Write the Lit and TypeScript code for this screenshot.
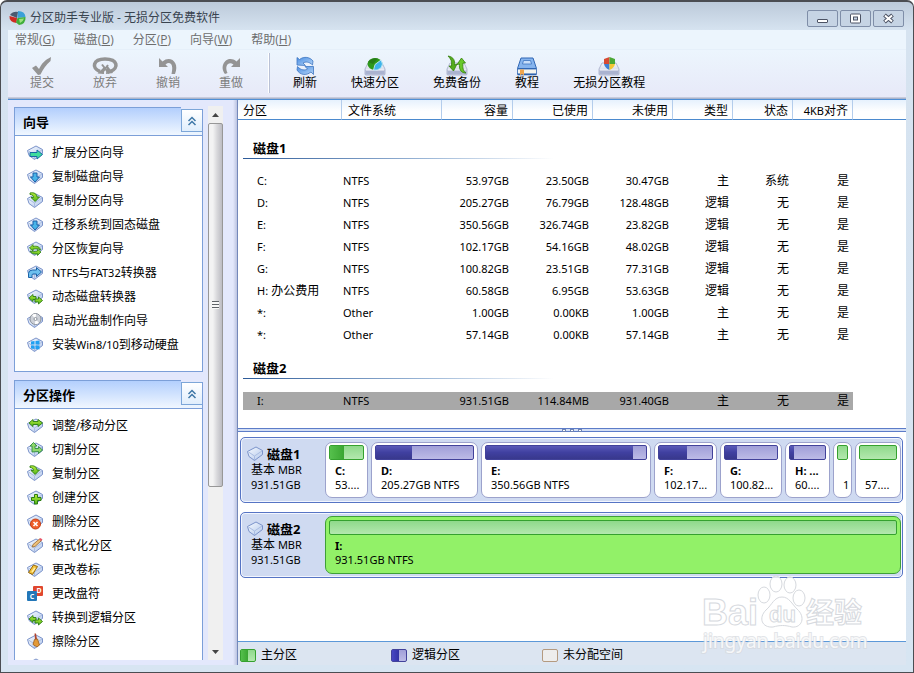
import { LitElement, html, css, svg, nothing } from "lit";
import { customElement, state } from "lit/decorators.js";
import { classMap } from "lit/directives/class-map.js";
import { styleMap } from "lit/directives/style-map.js";

type Row = string[];
interface Volume { name: string; label: string; share: number; used: number; kind: "primary" | "logical"; selected?: boolean; }

const MENUS = [["常规", "G"], ["磁盘", "D"], ["分区", "P"], ["向导", "W"], ["帮助", "H"]];

const WIZARDS = [
  ["extend", "扩展分区向导"], ["down", "复制磁盘向导"], ["copy", "复制分区向导"],
  ["down", "迁移系统到固态磁盘"], ["recover", "分区恢复向导"], ["convert", "NTFS与FAT32转换器"],
  ["swap", "动态磁盘转换器"], ["disc", "启动光盘制作向导"], ["win", "安装Win8/10到移动硬盘"],
];

const OPERATIONS = [
  ["resize", "调整/移动分区"], ["split", "切割分区"], ["copy", "复制分区"], ["create", "创建分区"],
  ["remove", "删除分区"], ["format", "格式化分区"], ["label", "更改卷标"], ["letter", "更改盘符"],
  ["swap", "转换到逻辑分区"], ["wipe", "擦除分区"], ["plain", ""],
];

const HEADERS = ["分区", "文件系统", "容量", "已使用", "未使用", "类型", "状态", "4KB对齐"];

const GROUPS: { title: string; rows: Row[] }[] = [
  {
    title: "磁盘1",
    rows: [
      ["C:", "NTFS", "53.97GB", "23.50GB", "30.47GB", "主", "系统", "是"],
      ["D:", "NTFS", "205.27GB", "76.79GB", "128.48GB", "逻辑", "无", "是"],
      ["E:", "NTFS", "350.56GB", "326.74GB", "23.82GB", "逻辑", "无", "是"],
      ["F:", "NTFS", "102.17GB", "54.16GB", "48.02GB", "逻辑", "无", "是"],
      ["G:", "NTFS", "100.82GB", "23.51GB", "77.31GB", "逻辑", "无", "是"],
      ["H: 办公费用", "NTFS", "60.58GB", "6.95GB", "53.63GB", "逻辑", "无", "是"],
      ["*:", "Other", "1.00GB", "0.00KB", "1.00GB", "主", "无", "是"],
      ["*:", "Other", "57.14GB", "0.00KB", "57.14GB", "主", "无", "是"],
    ],
  },
  { title: "磁盘2", rows: [["I:", "NTFS", "931.51GB", "114.84MB", "931.40GB", "主", "无", "是"]] },
];

const DISKS: { title: string; volumes: Volume[] }[] = [
  {
    title: "磁盘1",
    volumes: [
      { name: "C:", label: "53....", share: 43, used: 43, kind: "primary" },
      { name: "D:", label: "205.27GB NTFS", share: 107, used: 37, kind: "logical" },
      { name: "E:", label: "350.56GB NTFS", share: 170, used: 92, kind: "logical" },
      { name: "F:", label: "102.17...", share: 63, used: 52, kind: "logical" },
      { name: "G:", label: "100.82...", share: 62, used: 23, kind: "logical" },
      { name: "H: ...", label: "60....", share: 45, used: 11, kind: "logical" },
      { name: "", label: "1", share: 19, used: 0, kind: "primary" },
      { name: "", label: "57....", share: 46, used: 0, kind: "primary" },
    ],
  },
  { title: "磁盘2", volumes: [{ name: "I:", label: "931.51GB NTFS", share: 576, used: 0, kind: "primary", selected: true }] },
];

/* Latin runs inside Chinese labels are set one size smaller. */
const mixed = (text: string) =>
  text.split(/([\x21-\x7e]+)/).map((part) => (/^[\x21-\x7e]+$/.test(part) ? html`<span class="latin">${part}</span>` : part));

const drive = svg`<path d="M.5 5.500 L9 1 L15.500 4.500 V8.500 L7.500 14.500 L2 10.500 Z" fill="url(#drive)" stroke="#7b93ca"/>
  <path d="M1.500 6 L7.500 10 L15 5 M7.500 10 V14" fill="none" stroke="#a9bce2"/>`;
const green = { fill: "url(#leaf)", line: "#2b7d12" };

const OVERLAYS: Record<string, unknown> = {
  plain: nothing,
  extend: svg`<path d="M3 7.500 H10 V5 L15.500 9.500 L10 14 V11.500 H3 Z" fill="#3ddc9c" stroke="#1668a8"/>`,
  down: svg`<path d="M6 4 H10 V8 H12.500 L8 13 L3.500 8 H6 Z" fill="#48b4e8" stroke="#1a5fa8"/>`,
  copy: svg`<path d="M3 0 C7 -1 10 1 10 4 H12.500 L8.200 8.500 L4 4.500 H6.500 C6.500 2.500 5 1.500 3 1.500 Z" fill=${green.fill} stroke=${green.line} stroke-width=".9"/>`,
  recover: svg`<path d="M2.500 7 L6 3.500 V5.500 C10 4.500 13 6 13.500 9 C11 7.500 9 7.500 6 8.200 V10 Z" fill=${green.fill} stroke=${green.line} stroke-width=".8"/>
    <path d="M14 11 L10.500 14.500 V12.800 C7 13.500 4 12.500 3 10 C6 11 8 10.800 10.500 10 V8.500 Z" fill=${green.fill} stroke=${green.line} stroke-width=".8"/>`,
  convert: svg`<path d="M1.500 12.500 V8.500 Q1.500 5 5.500 5 H9.500 V2.500 L14.500 7 L9.500 11.500 V9 H6 Q5 9 5 10.500 V12.500 Z" fill="#6cc0ee" stroke="#1c62a8"/>`,
  swap: svg`<path d="M2 9 L6 5.500 V7.500 H9 V10.500 H6 V12.500 Z" fill=${green.fill} stroke=${green.line} stroke-width=".9"/>
    <path d="M15.500 11.500 L11.500 8 V10 H8 V13 H11.500 V15 Z" fill=${green.fill} stroke=${green.line} stroke-width=".9"/>`,
  disc: svg`<circle cx="8.500" cy="6" r="5.500" fill="#cdd1d8" stroke="#8d939c"/><path d="M8.500 6 L5 2 A5 5 0 0 1 9 1 Z M8.500 6 L12 10 A5 5 0 0 1 8 11 Z" fill="#fff"/><circle cx="8.500" cy="6" r="1.500" fill="#fff" stroke="#8d939c"/>`,
  win: svg`<path d="M4 4.500 L7.500 4 V7.500 H4 Z M8.500 4 L12.500 3.500 V7.500 H8.500 Z M4 8.500 H7.500 V12 L4 11.500 Z M8.500 8.500 H12.500 V12.500 L8.500 12 Z" fill="#1fa0f2"/>`,
  resize: svg`<path d="M2 5 L6 1.500 V3.500 H11 V1.500 L15.500 5 L11 8.500 V6.500 H6 V8.500 Z" fill=${green.fill} stroke=${green.line} stroke-width=".9"/>`,
  split: svg`<path d="M5 10 V4 H3 L6.500 .5 L10 4 H8 V6.500 H11.500 V4.500 L15.500 8 L11.500 11.500 V9.500 Z" fill="#8fd86c" stroke="#2f8a40" stroke-width=".9"/>`,
  create: svg`<path d="M7.500 4.500 H10.500 V7.500 H14 V10.500 H10.500 V14 H7.500 V10.500 H4.500 V7.500 H7.500 Z" fill=${green.fill} stroke=${green.line}/>`,
  remove: svg`<circle cx="8.500" cy="10" r="5" fill="#f0602c" stroke="#c63c12"/><path d="M6.500 8 L10.500 12 M10.500 8 L6.500 12" stroke="#fff" stroke-width="1.600"/>`,
  format: svg`<path d="M5 9 L6 6.500 L12.500 1 L14.500 2.500 L8 8.500 Z" fill="#efc27a" stroke="#95672e" stroke-width=".8"/><path d="M12 1.500 L13.500 0 L15.500 1.500 L14 3 Z" fill="#e8566a"/>`,
  label: svg`<path d="M1.500 10.500 L6.500 3 L10.500 4.500 L5.500 12.500 Z" fill="#f4c33c" stroke="#98690c"/><path d="M5 10 L8 6" stroke="#fff0a8" stroke-width="1.500"/>`,
  wipe: svg`<path d="M7.500 -.5 L9 -.5 L10 5 L8 5.500 Z" fill="#b0432e"/><path d="M7.500 5.500 L10.500 5 L12.500 11 L10 13 L6 10.500 Z" fill="#e39a38" stroke="#9c5c18" stroke-width=".8"/>`,
};

const icon16 = (name: string) => html`<svg class="icon" viewBox="0 0 16 16" aria-hidden="true">${name === "letter"
  ? svg`<rect x="6" width="10" height="10" rx="1" fill="#e0472f"/><rect y="5" width="10" height="10" rx="1" fill="#2377b8"/>
      <text class="glyph" x="12" y="7">D</text><text class="glyph" x="5" y="13">C</text>`
  : svg`${drive}${OVERLAYS[name]}`}</svg>`;

const tray = svg`<path d="M4 7 H18 L21 13 V18 Q21 19 20 19 H2 Q1 19 1 18 V13 Z" fill="url(#tray)" stroke="#a2aac6" stroke-width=".8"/>
  <path d="M1.500 14 H20.500 V18 H1.500 Z" fill="#aab3d0"/><path d="M2 14 H20" stroke="#f4f6fc"/>`;

const TOOLS: { label: string; disabled?: boolean; art: unknown }[] = [
  { label: "提交", disabled: true, art: svg`<path d="M1 12 L5 9.500 L8 13 C11 7 14 4 20 1 L19.500 5 C15 9 12 13 9.500 18.500 L7 19 Z" fill="#949494"/>` },
  { label: "放弃", disabled: true, art: svg`<path d="M6 15.500 C-3 12 -1 3 11 3 C24 3 25 12 16.500 15.500" fill="none" stroke="#949494" stroke-width="3.600"/><path d="M3.500 17.500 L10 18 L10 11 Z M13 9 L19 17 L12 18 Z" fill="#949494"/><path d="M8 8.500 L15 17.500 M14 9 L8 17" stroke="#949494" stroke-width="2"/>` },
  { label: "撤销", disabled: true, art: svg`<path d="M2 2 L2 11 L11 11 L8.500 8.500 C13 5 17 8 14.500 18 L18 18 C23 6 13 -1 5.500 5.500 Z" fill="#949494"/>` },
  { label: "重做", disabled: true, art: svg`<path d="M20 2 L20 11 L11 11 L13.500 8.500 C9 5 4 9 7.500 17 L5 18 C-2 9 8 -2 16.500 5.500 Z" fill="#949494"/>` },
  { label: "刷新", art: svg`<path d="M3 9 L3 1.500 L5.500 3.500 C10 0 16 1 19 5 L18.500 9 C15 5.500 11.500 5.500 9 7 L11.500 9.500 Z" fill="url(#sky)" stroke="#3f76c0" stroke-width=".8"/><path d="M19.500 10.500 V18.500 L17 16 C12 20 6 19 3 14 L3.500 10.500 C7 14.500 11 14.500 13.500 13 L11 10.500 Z" fill="url(#sky)" stroke="#3f76c0" stroke-width=".8"/>` },
  { label: "快速分区", art: svg`${tray}<ellipse cx="11" cy="8" rx="7.500" ry="6" fill="#2f9a1c"/><path d="M4 6 Q8 1 14 2.500 L9 8 Z" fill="#277d18"/><path d="M11 8.500 L17 4 Q20 8 17 12 Q13 15 9.500 14 Z" fill="#3eb4ea" stroke="#d6f0ff" stroke-width=".8"/>` },
  { label: "免费备份", art: svg`${tray}<path d="M2 0 C8 1 9 5 8.500 9 L11 8 L7.500 15 L3 10 L5.500 10 C6 5 5 3 2 0 Z" fill="#55ad1e" stroke="#347f0c" stroke-width=".8"/><path d="M20 17 C14 17 13 12 13.500 8 L11 8.500 L15.500 2 L19.500 7 L17 7 C16.500 12 17 15 20 17 Z" fill="#68c82a" stroke="#347f0c" stroke-width=".8"/>` },
  { label: "教程", art: svg`<path d="M5 2 H17 L20.500 12.500 H1.500 Z" fill="#86b4ee" stroke="#3167b4"/><path d="M7.500 4.500 H14.500 L15.500 8 H6.500 Z" fill="#c8defa" stroke="#3c74bf" stroke-width=".8"/><rect x="1.500" y="13" width="19" height="5" fill="#f4f4ee" stroke="#3167b4" stroke-width=".8"/><path d="M1.500 18.500 H20.500" stroke="#2c62ae" stroke-width="1.500"/><path d="M4 13.500 H8 V19.500 L6 18 L4 19.500 Z" fill="#f2a64c"/>` },
  { label: "无损分区教程", art: svg`${tray}<path d="M11.500 1 L6 3 V8 H11.500 Z" fill="#d84a32"/><path d="M11.500 1 L17 3 V8 H11.500 Z" fill="#4ba836"/><path d="M6 8 H11.500 V14 Q7 12 6 8 Z" fill="#3d80d4"/><path d="M17 8 H11.500 V14 Q16 12 17 8 Z" fill="#f4c734"/>` },
];

@customElement("app-root")
export class AppRoot extends LitElement {
  @state() private closed = new Set<string>();

  static styles = css`
    :host {
      display: block;
      height: 100vh;
      min-height: 480px;
      color: #000;
      font: 12px/16px "Noto Sans", "Noto Sans CJK SC", sans-serif;
    }
    * { box-sizing: border-box; }
    button {
      margin: 0; padding: 0; border: 0; background: none;
      color: inherit; font: inherit; cursor: default;
    }
    .defs { position: absolute; width: 0; height: 0; }
    .latin { font-size: 11px; }
    .icon { display: block; width: 16px; height: 16px; flex: none; overflow: visible; }
    .glyph { font: bold 7px "Noto Sans", sans-serif; fill: #fff; text-anchor: middle; }

    .window {
      position: relative; height: 100%;
      display: flex; flex-direction: column;
      padding: 0 7px 7px;
      border: 1px solid #4b4d52; border-top-width: 2px;
      border-radius: 7px 7px 0 0;
      background: linear-gradient(#bccada, #d6e3f0 28px, #d7e5f2);
      overflow: hidden;
    }
    .titlebar { display: flex; align-items: center; height: 28px; flex: none; padding: 4px 2px 0 1px; gap: 4px; color: #38434f; }
    .titlebar h1 { flex: 1; margin: 0; font: inherit; font-family: "Noto Sans", "Noto Sans CJK SC", sans-serif; }
    .logo { width: 17px; height: 16px; }
    .controls { display: flex; gap: 2px; }
    .controls button { width: 31px; height: 17px; border: 1px solid #7f8ea8; border-radius: 2px; background: #c6d4e4; }
    .controls svg { display: block; margin: auto; width: 13px; height: 11px; }

    .menubar { display: flex; gap: 19px; flex: none; height: 20px; padding: 0 7px; background: #ecf5fd; color: #6d6d6d; border-bottom: 1px solid #e6f0fa; }
    .menubar button { line-height: 20px; font-family: "Open Sans", "Noto Sans CJK SC", sans-serif; }
    .toolbar { display: flex; flex: none; height: 49px; padding: 6px 22px 0; background: linear-gradient(#ecf5fd, #e7e9f8); border-bottom: 1px solid #a9b4cc; box-shadow: inset 0 -1px #c7cbdc; }
    .tools { display: flex; gap: 39px; }
    .tools.main { gap: 34px; margin-left: 23px; }
    .tools button { display: flex; flex-direction: column; align-items: center; min-width: 24px; line-height: 14px; white-space: nowrap; height: 36px; }
    .tools button:disabled { color: #7d7d7d; }
    .tools svg { width: 22px; height: 20px; flex: none; overflow: visible; }
    .rule { width: 2px; height: 40px; margin-top: -3px; margin-left: 25px; background: linear-gradient(90deg, #fff 50%, #b9c1d6 50%); }

    .body { flex: 1; min-height: 0; display: flex; border-top: 1px solid #4f8fd6; background: #fff; }
    .side { flex: none; width: 225px; display: flex; gap: 5px; padding: 6px 10px 5px 6px; background: #e3e8fc; }
    .panels { flex: 1; min-width: 0; overflow: hidden; display: flex; flex-direction: column; gap: 8px; padding-top: 1px; }
    .panel { flex: none; }
    .head { display: flex; height: 29px; }
    .head h2 { flex: 1; margin: 0; padding: 0 8px; font-size: 13px; line-height: 28px; background: linear-gradient(#b3cffd, #f0f7ff); border: 1px solid #7c9fd8; border-right: 0; }
    .fold { width: 22px; margin-top: 2px; display: flex; flex-direction: column; background: #ebf4fe; border-bottom: 1px solid #7c9fd8; border-right: 1px solid #7c9fd8; }
    .fold button { height: 23px; border: 1px solid #7ca6d8; border-right: 0; background: linear-gradient(#fff, #e0eefc); }
    .fold svg { display: block; margin: auto; width: 10px; height: 10px; }
    .list { margin: 0; padding: 5px 12px 14px; list-style: none; background: #fff; border: 1px solid #7c9fd8; border-top: 0; }
    .list button { display: flex; align-items: center; gap: 9px; height: 24px; width: 100%; white-space: nowrap; }

    .scroll { flex: none; width: 15px; display: flex; flex-direction: column; background: #f0f0f0; }
    .scroll button { height: 17px; }
    .scroll svg { display: block; margin: auto; width: 7px; height: 4px; }
    .track { flex: 1; }
    .thumb { height: 70%; border: 1px solid #979797; border-radius: 2px; display: flex; align-items: center; justify-content: center; background: linear-gradient(90deg, #f3f3f3 30%, #d9d9dc 60%, #bcbcc2); }
    .grip { width: 7px; height: 8px; background: repeating-linear-gradient(#5f6368 0 1px, #f8f8f8 1px 3px); }
    .split { flex: none; width: 5px; background: linear-gradient(90deg, #e4e8fb, #c0c8e4 70%, #7488ba 80%); }

    .main-pane { flex: 1; min-width: 0; display: flex; flex-direction: column; }
    .grid { flex: none; height: 328px; overflow: hidden; }
    table { width: 100%; table-layout: fixed; border-spacing: 0; font-size: 11px; }
    th, td { padding: 0 4px 0 0; text-align: right; white-space: nowrap; overflow: hidden; }
    thead th { height: 20px; font-weight: normal; font-size: 12px; line-height: 17px; background: linear-gradient(#e6f1fd, #fff 60%); border-bottom: 1px solid #4c8ace; padding-top: 2px; border-right: 1px solid #b4cdec; }
    thead th.blank { border-right: 0; }
    thead th.first { text-align: left; padding-left: 5px; }
    thead th.fs { text-align: left; padding-left: 6px; }
    .gap { width: 5px; } .c-name { width: 99px; } .c-fs { width: 100px; } .c-cap { width: 71px; }
    .c-size { width: 80px; } .c-flag { width: 60px; }
    td { height: 22px; line-height: 18px; border: solid transparent; border-width: 2px 0; background-clip: padding-box; }
    td.name { text-align: left; padding-left: 14px; }
    td.fs { text-align: left; padding-left: 1px; }
    td.zh, .zh { font-size: 12px; }
    .picked td:not(.blank) { background-color: #a8a8a8; }
    th.group { padding: 12px 0 11px 5px; text-align: left; font-size: 13px; line-height: 20px; }
    tbody:first-of-type th.group { padding-top: 18px; }
    .group span { display: block; max-width: 310px; padding-left: 10px; border-bottom: 1px solid; border-image: linear-gradient(90deg, #2c5a98, #9db8d8 60%, #fff) 1; }

    .bar { flex: none; height: 4px; display: flex; justify-content: center; gap: 4px; border: solid #5c7cc8; border-width: 1px 0; background: #d3def4; }
    .bar i { width: 4px; height: 3px; border: 1px solid #6d83b4; background: #fff; }
    .disks { flex: 1; min-height: 0; overflow: hidden; display: flex; flex-direction: column; gap: 9px; padding: 5px 3px 0 2px; }
    .disk { flex: none; display: flex; height: 66px; padding: 3px 1px 3px 0; border: 1px solid #5674c4; border-radius: 5px; background: #cfdaf1; box-shadow: inset 0 0 0 1px #f2f6ff; }
    .info { flex: none; width: 84px; padding: 5px 0 0 10px; font-size: 11px; line-height: 15px; }
    .info h3 { display: flex; align-items: center; gap: 4px; margin: 0 0 0 -4px; font-size: 13px; line-height: 16px; white-space: nowrap; }
    .info p { margin: 0; }
    .volumes { flex: 1; min-width: 0; display: grid; gap: 3px; }
    .volume { min-width: 0; margin: 1px 0; padding: 2px 3px; border: 1px solid #9ca2cc; border-radius: 7px; background: #fff; text-align: left; font-size: 11px; line-height: 14px; white-space: nowrap; overflow: hidden; display: flex; flex-direction: column; align-items: stretch; }
    .volume b, .volume span { padding-left: 6px; height: 14px; }
    .volume b { margin-top: 4px; }
    .volume.selected { margin: 0; padding: 3px; background: #92f168; border-color: #3f9f38; }
    .usage { display: block; flex: none; border: 1px solid; border-radius: 2px; }
    .volume .usage { height: 15px; padding: 0; }
    .usage i { display: block; height: 100%; }
    .primary { border-color: #35a12f; background: linear-gradient(#8fd98b, #b3e8ae); }
    .primary i { background: linear-gradient(90deg, #55c04c, #3aa632); }
    .logical { border-color: #42429a; background: linear-gradient(#a09fd8, #bcbbe6); }
    .logical i { background: linear-gradient(#5a5ab8, #4040a0 50%, #38388c); }
    .free { border-color: #b49a80; background: #ededed; }

    .legend { flex: none; display: grid; grid-template-columns: repeat(3, 151px); align-items: center; height: 24px; padding: 3px 2px 0; border-top: 1px solid #5c98d8; background: #dce5f1; }
    .legend div { display: flex; align-items: center; gap: 5px; }
    .legend .usage { width: 16px; height: 13px; }
    .legend .usage i { width: 50%; }
    .legend .logical i { background: linear-gradient(90deg, #4646c4, #3232a4); }
    .watermark { position: absolute; right: 46px; bottom: 16px; width: 166px; height: 82px; overflow: visible; pointer-events: none; fill: #fff; fill-opacity: .8; stroke: #d6d9de; stroke-width: 1px; }
    .mark-name { font: bold 36px "Liberation Sans", sans-serif; }
    .mark-du { font: bold 22px "Liberation Sans", sans-serif; }
    .mark-zh { font: bold 28px "Noto Sans CJK SC", sans-serif; }
    .mark-url { font: 19px "Noto Sans", sans-serif; paint-order: stroke; stroke-width: 2px; stroke-opacity: .7; }
  `;

  private toggle(title: string) {
    const next = new Set(this.closed);
    if (!next.delete(title)) next.add(title);
    this.closed = next;
  }

  private panel(title: string, items: string[][]) {
    return html`<section class="panel">
      <div class="head">
        <h2>${title}</h2>
        <div class="fold"><button @click=${() => this.toggle(title)}>
          <svg viewBox="0 0 10 10"><path d="M1.500 5 L5 1.500 L8.500 5 M1.500 9 L5 5.500 L8.500 9" fill="none" stroke="#3f78a8" stroke-width="1.500"/></svg>
        </button></div>
      </div>
      ${this.closed.has(title) ? nothing : html`<ul class="list">
        ${items.map(([icon, text]) => html`<li><button>${icon16(icon)}<span>${mixed(text)}</span></button></li>`)}
      </ul>`}
    </section>`;
  }

  private tool = (t: (typeof TOOLS)[number]) =>
    html`<button ?disabled=${!!t.disabled}><svg viewBox="0 0 22 20">${t.art}</svg>${t.label}</button>`;

  private row(cells: Row, picked: boolean) {
    const kinds = ["name", "fs"];
    return html`<tr class=${classMap({ picked })}>
      <td class="blank"></td>
      ${cells.map((c, i) => html`<td class="${kinds[i] ?? ""} ${i === 0 || i > 4 ? "zh" : ""}">${mixed(c)}</td>`)}
      <td class="blank"></td>
    </tr>`;
  }

  private volume(v: Volume) {
    return html`<button class=${classMap({ volume: true, selected: !!v.selected })}>
      <span class="usage ${v.kind}"><i style=${styleMap({ width: `${v.used}%` })}></i></span>
      <b>${v.name}</b><span>${v.label}</span>
    </button>`;
  }

  private volumes(list: Volume[]) {
    const gridTemplateColumns = list.map((v) => `minmax(0, ${v.share}fr)`).join(" ");
    return html`<div class="volumes" style=${styleMap({ gridTemplateColumns })}>${list.map((v) => this.volume(v))}</div>`;
  }

  render() {
    return html`
      <svg class="defs" aria-hidden="true"><defs>
        <linearGradient id="drive" x2="1" y2="1"><stop stop-color="#f6faff"/><stop offset="1" stop-color="#b4c8ea"/></linearGradient>
        <linearGradient id="leaf" x2="0" y2="1"><stop stop-color="#b8ec38"/><stop offset="1" stop-color="#4fb41c"/></linearGradient>
        <linearGradient id="tray" x2="0" y2="1"><stop stop-color="#f6f7fb"/><stop offset="1" stop-color="#c2c9de"/></linearGradient>
        <linearGradient id="sky" x2="1" y2="1"><stop stop-color="#4a8ee4"/><stop offset="1" stop-color="#b4d4f6"/></linearGradient>
      </defs></svg>
      <div class="window">
        <header class="titlebar">
          <svg class="logo" viewBox="0 0 17 16" aria-hidden="true">
            <path d="M1 5 Q4 1 9 2 L8 8 Z" fill="#4c5a70"/><path d="M9 1 Q16 1 16.500 7 L8.500 8 Z" fill="#3aa0d8"/>
            <path d="M.5 6 L8 8 L7.500 13 Q0 12 .5 6 Z" fill="#cf2a22"/><path d="M8.500 8 L16.500 7 Q17 14 10 15 L7 12.500 Z" fill="#3fae3a"/><path d="M10 9 L15 8.500 Q14 12 11 13 Z" fill="#9be07e"/>
          </svg>
          <h1>分区助手专业版 - 无损分区免费软件</h1>
          <div class="controls">
            <button><svg viewBox="0 0 13 11"><rect x="1.500" y="6.500" width="10" height="3" rx=".5" fill="#fff" stroke="#4c5364"/></svg></button>
            <button><svg viewBox="0 0 13 11"><rect x="1.500" y="1" width="10" height="9" rx="1" fill="#fff" stroke="#4c5364"/><rect x="4.500" y="4" width="4" height="3" fill="#c6d4e4" stroke="#4c5364"/></svg></button>
            <button><svg viewBox="0 0 13 11"><path d="M2.500 2 L10.500 9 M10.500 2 L2.500 9" stroke="#4c5364" stroke-width="4"/><path d="M3 2.500 L10 8.500 M10 2.500 L3 8.500" stroke="#fff" stroke-width="2"/></svg></button>
          </div>
        </header>
        <nav class="menubar">${MENUS.map(([t, k]) => html`<button>${t}(<u>${k}</u>)</button>`)}</nav>
        <div class="toolbar">
          <div class="tools">${TOOLS.filter((t) => t.disabled).map(this.tool)}</div>
          <div class="rule"></div>
          <div class="tools main">${TOOLS.filter((t) => !t.disabled).map(this.tool)}</div>
        </div>
        <div class="body">
          <aside class="side">
            <div class="panels">${this.panel("向导", WIZARDS)}${this.panel("分区操作", OPERATIONS)}</div>
            <div class="scroll">
              <button><svg viewBox="0 0 7 4"><path d="M0 4 L3.500 0 L7 4 Z" fill="#444"/></svg></button>
              <div class="track"><div class="thumb"><div class="grip"></div></div></div>
              <button><svg viewBox="0 0 7 4"><path d="M0 0 L3.500 4 L7 0 Z" fill="#444"/></svg></button>
            </div>
          </aside>
          <div class="split"></div>
          <main class="main-pane">
            <div class="grid">
              <table>
                <colgroup>
                  <col class="gap"><col class="c-name"><col class="c-fs"><col class="c-cap"><col class="c-size"><col class="c-size">
                  <col class="c-flag"><col class="c-flag"><col class="c-flag"><col>
                </colgroup>
                <thead><tr>
                  ${HEADERS.map((h, i) => html`<th colspan=${i === 0 ? 2 : 1} class=${["first", "fs"][i] ?? ""}>${mixed(h)}</th>`)}
                  <th class="blank"></th>
                </tr></thead>
                ${GROUPS.map((g) => html`<tbody>
                  <tr><th class="group" colspan="10"><span>${g.title}</span></th></tr>
                  ${g.rows.map((r) => this.row(r, r[0] === "I:"))}
                </tbody>`)}
              </table>
            </div>
            <div class="bar"><i></i><i></i><i></i></div>
            <div class="disks">
              ${DISKS.map((d) => html`<section class="disk">
                <div class="info">
                  <h3>${icon16("plain")}${d.title}</h3>
                  <p><span class="zh">基本</span> MBR</p><p>931.51GB</p>
                </div>
                ${this.volumes(d.volumes)}
              </section>`)}
            </div>
            <footer class="legend">
              <div><span class="usage primary"><i></i></span>主分区</div>
              <div><span class="usage logical"><i></i></span>逻辑分区</div>
              <div><span class="usage free"></span>未分配空间</div>
            </footer>
          </main>
        </div>
        <svg class="watermark" viewBox="0 0 166 82">
          <text class="mark-name" x="1" y="51">Bai</text>
          <path d="M81 23 C88 23 91 30 96 35 C105 43 101 54 91 53 C84 51 79 51 72 53 C61 54 57 44 65 36 C71 31 73 23 81 23 Z"/>
          <ellipse cx="63" cy="21" rx="6" ry="8"/><ellipse cx="75" cy="10" rx="6" ry="8"/>
          <ellipse cx="89" cy="11" rx="6" ry="8"/><ellipse cx="98" cy="24" rx="6" ry="8"/>
          <text class="mark-du" x="68" y="48">du</text>
          <text class="mark-zh" x="105" y="49">经验</text>
          <text class="mark-url" x="2" y="74">jingyan.baidu.com</text>
        </svg>
      </div>`;
  }
}
